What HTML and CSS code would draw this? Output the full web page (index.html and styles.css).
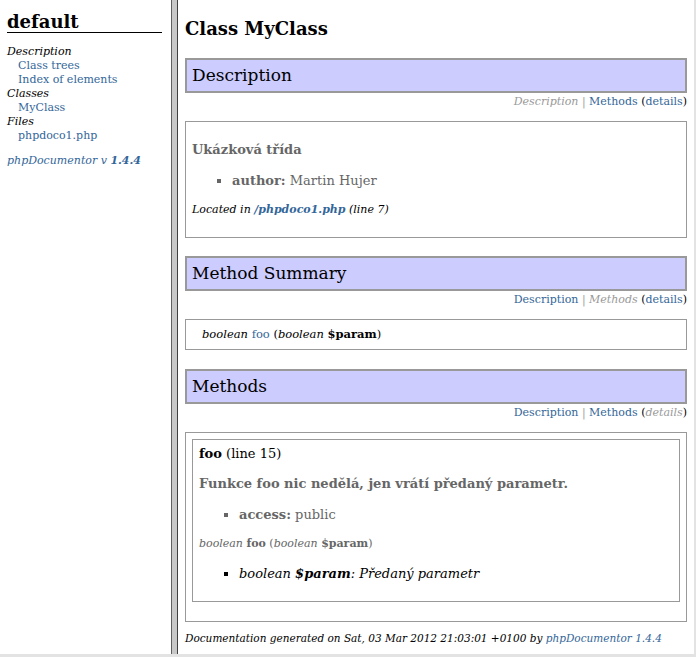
FILE: index.html
```html
<!DOCTYPE html>
<html>
<head>
<meta charset="utf-8">
<link rel="stylesheet" href="styles.css">
</head>
<body>
<div class="frames">
  <aside class="side">
    <div class="pkg">default</div>
    <div class="group">Description</div>
    <a class="item" href="#">Class trees</a>
    <a class="item" href="#">Index of elements</a>
    <div class="group">Classes</div>
    <a class="item" href="#">MyClass</a>
    <div class="group">Files</div>
    <a class="item" href="#">phpdoco1.php</a>
    <a class="credit" href="#">phpDocumentor v <b>1.4.4</b></a>
  </aside>
  <div class="divider"></div>
  <main class="main">
    <h1 class="title">Class MyClass</h1>

    <div class="box-title">Description</div>
    <div class="nav"><span class="disabled">Description</span> <span class="sep">|</span> <a href="#">Methods</a> (<a href="#">details</a>)</div>
    <div class="box box-desc">
      <div class="short">Ukázková třída</div>
      <ul class="tags"><li><b>author:</b> Martin Hujer</li></ul>
      <div class="located">Located in <a href="#"><b>/phpdoco1.php</b></a> (line <span>7</span>)</div>
    </div>

    <div class="box-title">Method Summary</div>
    <div class="nav"><a href="#">Description</a> <span class="sep">|</span> <span class="disabled">Methods</span> (<a href="#">details</a>)</div>
    <div class="box box-sum">
      <i>boolean</i> <a href="#">foo</a> (<i>boolean</i> <b>$param</b>)
    </div>

    <div class="box-title">Methods</div>
    <div class="nav"><a href="#">Description</a> <span class="sep">|</span> <a href="#">Methods</a> (<span class="disabled">details</span>)</div>
    <div class="box box-methods">
      <div class="method">
        <div class="mhead"><b>foo</b> (line 15)</div>
        <div class="short">Funkce foo nic nedělá, jen vrátí předaný parametr.</div>
        <ul class="tags"><li><b>access:</b> public</li></ul>
        <div class="sig"><i>boolean</i> <b>foo</b> (<i>boolean</i> <b>$param</b>)</div>
        <ul class="params"><li>boolean <b>$param</b>: Předaný parametr</li></ul>
      </div>
    </div>

    <div class="footer">Documentation generated on Sat, 03 Mar 2012 21:03:01 +0100 by <a href="#">phpDocumentor 1.4.4</a></div>
  </main>
</div>
</body>
</html>
```
FILE: styles.css
```css
html, body {
  margin: 0;
  padding: 0;
  height: 100%;
  background: #fff;
}
body {
  font-family: "DejaVu Serif", "Liberation Serif", serif;
  color: #000;
  overflow: hidden;
}
a { color: #336699; text-decoration: none; }

.frames {
  display: flex;
  height: 654px;
  width: 694px;
  border-right: 2px solid #e3e3e3;
  border-bottom: 3px solid #e3e3e3;
}

.side {
  width: 157px;
  flex: none;
  padding: 11px 7px 0 7px;
  display: flex;
  flex-direction: column;
  font-size: 11px;
  line-height: 14px;
}
.pkg {
  font-size: 18px;
  font-weight: bold;
  line-height: 21px;
  height: 21px;
  border-bottom: 1px solid #000;
  margin-bottom: 12px;
  width: 155px;
}
.group { font-style: italic; }
.item { padding-left: 11px; }
.credit { font-style: italic; margin-top: 11px; }

.divider {
  width: 5px;
  flex: none;
  border-left: 1px solid #606060;
  border-right: 1px solid #404040;
  background: #c8c8c8;
}

.main {
  flex: 1;
  padding: 0 7px;
  font-size: 12px;
}
.title {
  margin: 17px 0 18px 0;
  font-size: 18px;
  line-height: 23px;
}
.box-title {
  border: 2px solid #999;
  background: #ccf;
  height: 31px;
  line-height: 31px;
  padding: 0 5px;
  font-size: 17px;
}
.nav {
  text-align: right;
  font-size: 11px;
  line-height: 14px;
  margin-top: 2px;
  margin-bottom: 12px;
}
.disabled { font-style: italic; color: #999; }
.sep { color: #999; }

.box {
  border: 1px solid #999;
  margin-bottom: 19px;
}
.box-desc { padding: 18px 6px 17px 6px; margin-bottom: 18px; }
.short {
  font-weight: bold;
  color: #666;
  font-size: 13px;
  line-height: 20px;
}
.tags {
  margin: 11px 0 9px 0;
  padding-left: 40px;
  list-style-type: square;
  color: #666;
  font-size: 13px;
  line-height: 20px;
}
.located {
  font-style: italic;
  font-size: 11px;
  line-height: 20px;
}
.box-sum {
  padding: 5px 16px;
  line-height: 19px;
  font-size: 11.5px;
}
.box-methods {
  padding: 6px 6px 19px 6px;
  margin-bottom: 8px;
}
.method {
  border: 1px solid #999;
  padding: 5px 6px 17px 6px;
}
.mhead { font-size: 13px; line-height: 18px; margin-bottom: 11px; }
.method .tags { margin: 11px 0 11px 0; }
.sig {
  font-size: 11px;
  line-height: 16px;
  color: #666;
}
.params {
  margin: 12px 0 0 0;
  padding-left: 40px;
  list-style-type: square;
  font-style: italic;
  font-size: 13px;
  line-height: 20px;
}
.footer {
  font-style: italic;
  font-size: 10.5px;
  line-height: 16px;
}
```
